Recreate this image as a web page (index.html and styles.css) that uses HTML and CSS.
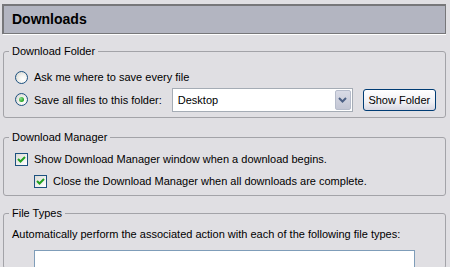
FILE: index.html
```html
<!DOCTYPE html>
<html>
<head>
<meta charset="utf-8">
<link rel="stylesheet" href="styles.css">
</head>
<body>
<div class="pane">
  <div class="header">Downloads</div>

  <fieldset class="group g1">
    <legend>Download Folder</legend>
    <div class="row r1">
      <span class="radio"></span>
      <span class="label">Ask me where to save every file</span>
    </div>
    <div class="row r2">
      <span class="radio checked"><span class="dot"></span></span>
      <span class="label">Save all files to this folder:</span>
      <div class="select">
        <span class="sel-text">Desktop</span>
        <span class="sel-btn">
          <svg width="9" height="6" viewBox="0 0 9 6"><path d="M1 1 L4.5 4.5 L8 1" fill="none" stroke="#4d6185" stroke-width="2"/></svg>
        </span>
      </div>
      <button class="btn">Show Folder</button>
    </div>
  </fieldset>

  <fieldset class="group g2">
    <legend>Download Manager</legend>
    <div class="row c1">
      <span class="check"><svg width="11" height="11" viewBox="0 0 11 11"><path d="M2 5 L4.5 7.5 L9 3" fill="none" stroke="#21a121" stroke-width="2"/></svg></span>
      <span class="label">Show Download Manager window when a download begins.</span>
    </div>
    <div class="row c2">
      <span class="check"><svg width="11" height="11" viewBox="0 0 11 11"><path d="M2 5 L4.5 7.5 L9 3" fill="none" stroke="#21a121" stroke-width="2"/></svg></span>
      <span class="label">Close the Download Manager when all downloads are complete.</span>
    </div>
  </fieldset>

  <fieldset class="group g3">
    <legend>File Types</legend>
    <div class="desc">Automatically perform the associated action with each of the following file types:</div>
    <div class="listbox"></div>
  </fieldset>
</div>
</body>
</html>
```

FILE: styles.css
```css
html, body {
  margin: 0;
  padding: 0;
  background: #e0dfe3;
  height: 267px;
  overflow: hidden;
}
body {
  font-family: "Liberation Sans", Arial, sans-serif;
  font-size: 11px;
  color: #000;
}
.pane {
  padding: 4px 0 0 2px;
  width: 444px;
  height: 263px;
  overflow: hidden;
}
.header {
  height: 27px;
  border-top: 2px solid #77777a;
  border-left: 2px solid #77777a;
  border-right: 1px solid #77777a;
  border-bottom: 1px solid #77777a;
  box-shadow: 1px 1px 0 #ffffff;
  background: #b3b5c1;
  font-size: 14px;
  font-weight: bold;
  line-height: 27px;
  padding-left: 8px;
}
.group {
  margin: 11px 0 0 1px;
  padding: 0 0 0 5px;
  border: 1px solid #a3a3a8;
  border-radius: 3px;
  min-width: 0;
}
.group legend {
  padding: 0 3px;
  line-height: 13px;
  font-size: 11px;
}
.row {
  display: flex;
  align-items: center;
  padding-left: 6px;
}
.g1 { padding-bottom: 6px; }
.r1 { height: 18px; margin-top: 10px; }
.r2 { height: 23px; margin-top: 2px; }
.radio {
  width: 11px;
  height: 11px;
  border: 1px solid #1c5180;
  border-radius: 50%;
  background: radial-gradient(circle at 65% 65%, #ffffff 0%, #f2f2ef 40%, #cfcfc8 100%);
  display: flex;
  align-items: center;
  justify-content: center;
  flex: none;
}
.dot {
  width: 5px;
  height: 5px;
  border-radius: 50%;
  background: radial-gradient(circle at 35% 35%, #8ee28e 0%, #21a121 70%);
}
.label {
  margin-left: 6px;
  white-space: nowrap;
}
.select {
  margin-left: 10px;
  width: 179px;
  height: 22px;
  border: 1px solid #a5acb5;
  background: #fff;
  display: flex;
  align-items: stretch;
  box-sizing: content-box;
}
.sel-text {
  flex: 1;
  padding-left: 5px;
  line-height: 22px;
}
.sel-btn {
  width: 16px;
  margin: 1px;
  border: 1px solid #b6bccb;
  border-radius: 2px;
  background: linear-gradient(#d9dbe6, #c3c6d4);
  display: flex;
  align-items: center;
  justify-content: center;
  box-sizing: border-box;
}
.btn {
  margin-left: 10px;
  width: 73px;
  height: 22px;
  padding: 0;
  border: 1px solid #003c74;
  border-radius: 3px;
  background: linear-gradient(#ffffff, #f0f0f4 60%, #d8d8e2);
  font-family: "Liberation Sans", Arial, sans-serif;
  font-size: 11px;
  color: #000;
}
.g2 { padding-bottom: 3px; margin-top: 13px; }
.c1 { height: 22px; margin-top: 4px; }
.c2 { height: 22px; padding-left: 25px; }
.check {
  width: 11px;
  height: 11px;
  border: 1px solid #1c5180;
  background: linear-gradient(135deg, #dcdcd7, #ffffff);
  display: flex;
  align-items: center;
  justify-content: center;
  flex: none;
}
.g3 { margin-top: 11px; height: 60px; }
.desc {
  margin-top: 8px;
  padding-left: 3px;
  line-height: 13px;
  white-space: nowrap;
}
.listbox {
  margin: 9px 0 0 25px;
  width: 379px;
  height: 40px;
  border: 1px solid #7f9db9;
  background: #fff;
}
```
